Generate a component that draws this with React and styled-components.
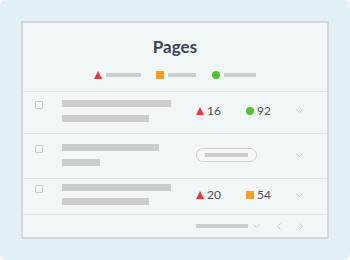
import React from "react"
import styled, { createGlobalStyle } from "styled-components"

const Global = createGlobalStyle`
  html, body { margin: 0; padding: 0; background: #ffffff; }
  body { font-family: Lato, "Liberation Sans", sans-serif; }
`

const Frame = styled.div`
  width: 350px;
  height: 260px;
  box-sizing: border-box;
  padding: 21px;
  background: #e3f1f7;
  border-radius: 6px;
`

const Card = styled.div`
  height: 100%;
  box-sizing: border-box;
  border: 2px solid #d4d8da;
  background: #f1f6f7;
  display: flex;
  flex-direction: column;
`

const Header = styled.div`
  height: 69px;
  box-sizing: border-box;
  padding-top: 14px;
  border-bottom: 1px solid #dfe4e6;
  display: flex;
  flex-direction: column;
  align-items: center;
`

const Title = styled.h1`
  margin: 0;
  font-size: 17px;
  line-height: 20px;
  font-weight: 700;
  color: #3b4452;
`

const Legend = styled.div`
  margin-top: 14px;
  display: flex;
  align-items: center;
`

const LegendItem = styled.div`
  display: flex;
  align-items: center;
  gap: 4px;
  margin-right: ${(p) => p.$space}px;
`

const Bar = styled.div`
  width: ${(p) => p.$w}px;
  height: ${(p) => p.$h || 7}px;
  background: #cacecf;
`

const Row = styled.div`
  display: flex;
  align-items: flex-start;
  padding: ${(p) => p.$top}px 0 ${(p) => p.$bottom}px 12px;
  border-bottom: 1px solid #dfe4e6;
`

const Check = styled.div`
  width: 8px;
  height: 8px;
  margin-top: 1px;
  box-sizing: border-box;
  border: 1px solid #c8cccf;
  border-radius: 1px;
  background: #f7fafa;
`

const Lines = styled.div`
  margin-left: 19px;
  width: 134px;
  display: flex;
  flex-direction: column;
  gap: ${(p) => p.$gap}px;
`

const Metrics = styled.div`
  width: 100px;
  align-self: center;
  display: flex;
  align-items: center;
`

const Metric = styled.div`
  width: 52px;
  display: flex;
  align-items: center;
  gap: 3px;
  font-size: 12px;
  line-height: 12px;
  color: #4a4f55;
`

const Pill = styled.div`
  width: 61px;
  height: 14px;
  box-sizing: border-box;
  border: 1px solid #cbcfd1;
  border-radius: 8px;
  background: #f5f8f9;
  display: flex;
  align-items: center;
  justify-content: center;
`

const RowChevron = styled.div`
  align-self: center;
  display: flex;
`

const Footer = styled.div`
  flex: 1;
  display: flex;
  align-items: center;
  padding-left: 173px;
`

const Pager = styled.div`
  display: flex;
  align-items: center;
  margin-left: ${(p) => p.$ml}px;
`

const Triangle = () => (
  <svg width="8" height="8" viewBox="0 0 8 8">
    <polygon points="4,0 8,8 0,8" fill="#f0383c" />
  </svg>
)

const Square = () => (
  <svg width="8" height="8" viewBox="0 0 8 8">
    <rect width="8" height="8" fill="#fa9a28" />
  </svg>
)

const Dot = () => (
  <svg width="8" height="8" viewBox="0 0 8 8">
    <circle cx="4" cy="4" r="4" fill="#52c22f" />
  </svg>
)

const ChevronDown = () => (
  <svg width="7" height="4" viewBox="0 0 7 4">
    <polyline points="0.5,0.5 3.5,3.5 6.5,0.5" fill="none" stroke="#c6cacc" strokeWidth="1" />
  </svg>
)

const ChevronLeft = () => (
  <svg width="4" height="7" viewBox="0 0 4 7">
    <polyline points="3.5,0.5 0.5,3.5 3.5,6.5" fill="none" stroke="#c6cacc" strokeWidth="1" />
  </svg>
)

const ChevronRight = () => (
  <svg width="4" height="7" viewBox="0 0 4 7">
    <polyline points="0.5,0.5 3.5,3.5 0.5,6.5" fill="none" stroke="#c6cacc" strokeWidth="1" />
  </svg>
)

const icons = { warn: Triangle, mid: Square, ok: Dot }

const rows = [
  { top: 8, bottom: 11, gap: 8, bars: [109, 87], metrics: [["warn", 16], ["ok", 92]] },
  { top: 10, bottom: 12, gap: 8, bars: [97, 38], pill: true },
  { top: 5, bottom: 9, gap: 7, bars: [109, 87], metrics: [["warn", 20], ["mid", 54]] },
]

const App = () => {
  return (
    <Frame>
      <Global />
      <Card>
        <Header>
          <Title>Pages</Title>
          <Legend>
            <LegendItem $space={15}>
              <Triangle />
              <Bar $w={35} $h={4} />
            </LegendItem>
            <LegendItem $space={16}>
              <Square />
              <Bar $w={28} $h={4} />
            </LegendItem>
            <LegendItem $space={0}>
              <Dot />
              <Bar $w={32} $h={4} />
            </LegendItem>
          </Legend>
        </Header>
        {rows.map((r, i) => (
          <Row key={i} $top={r.top} $bottom={r.bottom}>
            <Check />
            <Lines $gap={r.gap}>
              {r.bars.map((w, j) => (
                <Bar key={j} $w={w} />
              ))}
            </Lines>
            <Metrics>
              {r.pill ? (
                <Pill>
                  <Bar $w={43} $h={4} />
                </Pill>
              ) : (
                r.metrics.map(([k, n]) => {
                  const Icon = icons[k]
                  return (
                    <Metric key={k}>
                      <Icon />
                      {n}
                    </Metric>
                  )
                })
              )}
            </Metrics>
            <RowChevron>
              <ChevronDown />
            </RowChevron>
          </Row>
        ))}
        <Footer>
          <Bar $w={52} $h={4} />
          <Pager $ml={5}>
            <ChevronDown />
          </Pager>
          <Pager $ml={17}>
            <ChevronLeft />
          </Pager>
          <Pager $ml={18}>
            <ChevronRight />
          </Pager>
        </Footer>
      </Card>
    </Frame>
  )
}

export default App
